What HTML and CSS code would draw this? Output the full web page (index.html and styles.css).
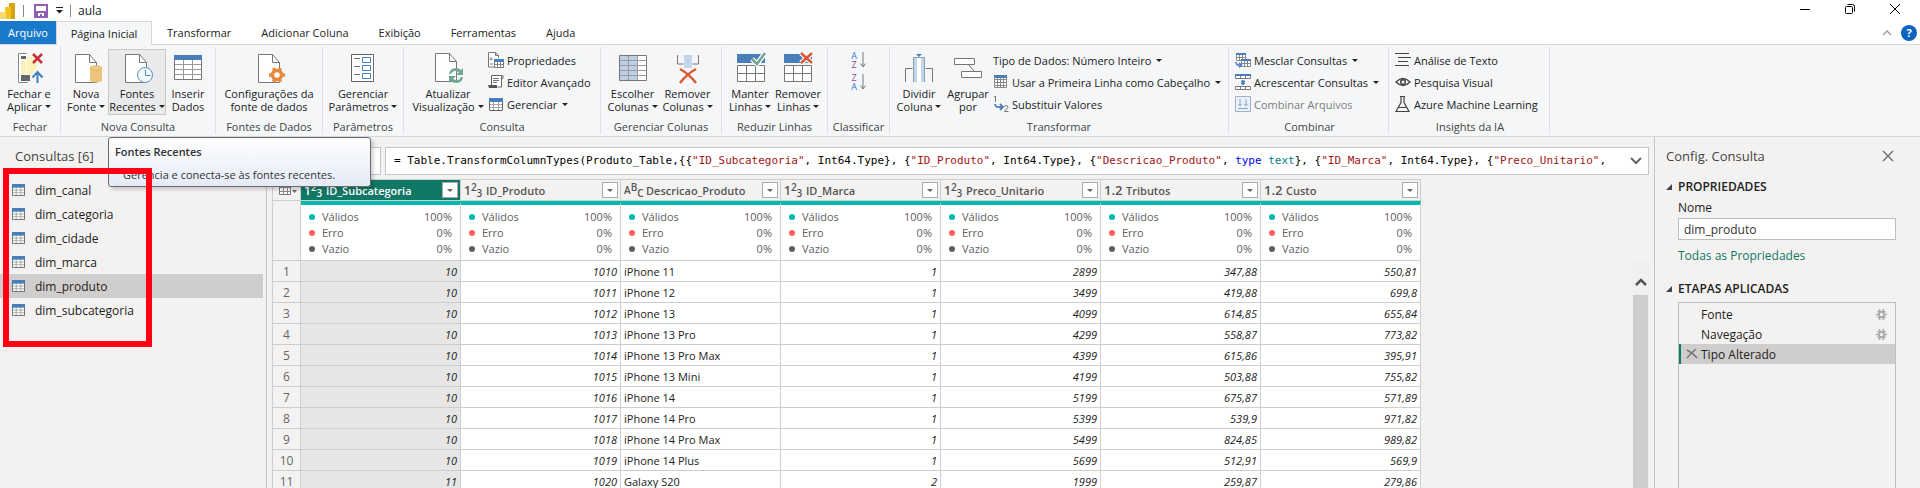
FILE: index.html
```html
<!DOCTYPE html>
<html lang="pt-BR">
<head>
<meta charset="utf-8">
<title>aula - Editor do Power Query</title>
<link rel="stylesheet" href="styles.css">
</head>
<body>
<svg class="defs" aria-hidden="true">
  <symbol id="page" viewBox="0 0 32 32"><path d="M5.500 2.500h14l7 8v20h-21z" fill="#fff" stroke="#777"/><path d="M19.500 2.500v8h7" fill="none" stroke="#777"/></symbol>
  <symbol id="table" viewBox="0 0 14 13"><path d="M.5.500h13v12H.5z" fill="#fff" stroke="#666"/><path d="M1 6.500h12M1 9.500h12M4.500 3v9M9.500 3v9" stroke="#a6a6a6"/><path d="M0 0h14v4H0z" fill="#4a7ebb"/></symbol>
  <symbol id="gear" viewBox="0 0 12 12"><path d="M4 0v12M8 0v12M0 6h12M1.500 3h9M1.500 9h9" stroke="#a8a8a8" stroke-width="1.600"/><circle cx="6" cy="6" r="3.500" fill="#a8a8a8"/><circle cx="6" cy="6" r="1.800" fill="#f3f2f1"/></symbol>
  <symbol id="corner" viewBox="0 0 20 14"><path d="M1.500 1.500h11v10h-11z" fill="#fff" stroke="#777"/><path d="M1.500 4.500h11M1.500 8.500h11M5.500 1v10M9.500 1v10" stroke="#888"/><path d="M14 7h5l-2.500 3z" fill="#666"/></symbol>
</svg>
<div class="app">
<header class="titlebar">
  <svg class="logo" viewBox="0 0 16 16"><path d="M9 0h6v16H9z" fill="#d9a213"/><path d="M5 4h6v12H5z" fill="#f2c21c"/><path d="M0 9h6v7H0z" fill="#f7dc6b"/></svg>
  <span class="bar"></span>
  <button class="tbtn" aria-label="Salvar"><svg width="14" height="14" viewBox="0 0 14 14"><path d="M1 1h12v12H1z" fill="#fff" stroke="#8e5fb5" stroke-width="2"/><path d="M1 7h12v2H1zM1 9h3v4H1zM10 9h3v4h-3z" fill="#8e5fb5"/><path d="M6 10h2v4H6z" fill="#8e5fb5"/></svg></button>
  <button class="tbtn qa" aria-label="Personalizar"><svg width="7" height="7" viewBox="0 0 7 7"><path d="M0 .5h7" stroke="#222"/><path d="M0 3h7L3.500 6.500z" fill="#222"/></svg></button>
  <span class="bar"></span>
  <span class="doc">aula</span>
  <div class="wincontrols">
    <button class="tbtn" aria-label="Minimizar"><svg width="12" height="12" viewBox="0 0 12 12"><path d="M1 6.500h10" stroke="#000"/></svg></button>
    <button class="tbtn" aria-label="Restaurar"><svg width="12" height="12" viewBox="0 0 12 12"><rect x="1.500" y="3.500" width="7" height="7" rx="1" fill="none" stroke="#000"/><path d="M3.500 1.500h5q2 0 2 2v5" fill="none" stroke="#000"/></svg></button>
    <button class="tbtn" aria-label="Fechar janela"><svg width="12" height="12" viewBox="0 0 12 12"><path d="M1 1l10 10M11 1L1 11" stroke="#000"/></svg></button>
  </div>
</header>
<nav class="tabs">
  <button class="tab file">Arquivo</button>
  <button class="tab active">Página Inicial</button>
  <button class="tab">Transformar</button>
  <button class="tab">Adicionar Coluna</button>
  <button class="tab">Exibição</button>
  <button class="tab">Ferramentas</button>
  <button class="tab">Ajuda</button>
  <div class="tabtools">
    <button class="tbtn" aria-label="Recolher faixa"><svg width="10" height="8" viewBox="0 0 10 8"><path d="M1 6l4-4 4 4" fill="none" stroke="#999" stroke-width="1.300"/></svg></button>
    <button class="help" aria-label="Ajuda do aplicativo">?</button>
  </div>
</nav>
<section class="ribbon">
  <div class="group g-close"><div class="items">
    <button class="big w50"><svg class="ico" viewBox="0 0 32 32"><path d="M14 1.500H5.500v29H15" fill="#fff" stroke="#888"/><path d="M8 9h5v13H8zM14 5h5l5 6v6l-6 5h-4z" fill="#fcf1b6"/><path d="M8 4h5v3H8zM8 23h9v6H8z" fill="#666"/><path d="M20 2l9 9M29 2l-9 9" stroke="#c92f34" stroke-width="2.500"/><path d="M24.500 31V21M19.500 25.500l5-5.500 5 5.500" fill="none" stroke="#4180bd" stroke-width="2"/></svg><span>Fechar e<br>Aplicar <i class="caret"></i></span></button>
  </div><div class="caption">Fechar</div></div>
  <div class="group g-new"><div class="items">
    <button class="big w44"><svg class="ico" viewBox="0 0 32 32"><use href="#page"/><path d="M20 15q6-3 12 0v14q-6 3-12 0z" fill="#ecc57c"/><ellipse cx="26" cy="16" rx="5.500" ry="2" fill="#f0cd8d" stroke="#e0b464"/></svg><span>Nova<br>Fonte <i class="caret"></i></span></button>
    <button class="big w58 hot"><svg class="ico" viewBox="0 0 32 32"><use href="#page" x="-1"/><circle cx="24" cy="23" r="7.500" fill="#f4f8fc" stroke="#5b93c4"/><path d="M24.500 18v5.500h5" fill="none" stroke="#4a87bd"/></svg><span>Fontes<br>Recentes <i class="caret"></i></span></button>
    <button class="big w44"><svg class="ico" viewBox="0 0 32 32"><path d="M2.500 3.500h27v24h-27z" fill="#fff" stroke="#777"/><path d="M3 12.500h26M3 17.500h26M3 22.500h26M11.500 8v19M20.500 8v19" stroke="#999"/><path d="M2 3h28v5H2z" fill="#4a7ebb"/></svg><span>Inserir<br>Dados</span></button>
  </div><div class="caption">Nova Consulta</div></div>
  <div class="group g-src"><div class="items">
    <button class="big w98"><svg class="ico" viewBox="0 0 32 32"><use href="#page"/><circle cx="24" cy="23" r="4.500" fill="#fff" stroke="#e58a3e" stroke-width="3.500"/><path d="M16 23h3M29 23h3M20.500 16l1.500 3M27.500 16L26 19M20.500 30l1.500-3M27.500 30L26 27" stroke="#e58a3e" stroke-width="3.500"/></svg><span>Configurações da<br>fonte de dados</span></button>
  </div><div class="caption">Fontes de Dados</div></div>
  <div class="group g-par"><div class="items">
    <button class="big w72"><svg class="ico" viewBox="0 0 32 32"><path d="M4.500 2.500h22v27h-22z" fill="#fff" stroke="#666"/><path d="M7 6.500h6M7 14.500h6M7 22.500h6" stroke="#777"/><path d="M15.500 5.500h8v5h-8zM15.500 13.500h8v5h-8zM15.500 21.500h8v5h-8z" fill="none" stroke="#4a7ebb"/></svg><span>Gerenciar<br>Parâmetros <i class="caret"></i></span></button>
  </div><div class="caption">Parâmetros</div></div>
  <div class="group g-qry"><div class="items">
    <button class="big w80"><svg class="ico" viewBox="0 0 32 32"><use href="#page" x="-2" y="-1"/><path d="M17 22q1-6 7-6 3 0 5 2l2-2v7h-7l3-3q-6-3-8 2zM31 25q-1 6-7 6-3 0-5-2l-2 2v-7h7l-3 3q6 3 8-2z" fill="#70a693"/></svg><span>Atualizar<br>Visualização <i class="caret"></i></span></button>
    <div class="small-col">
      <button class="small"><svg viewBox="0 0 16 16"><path d="M6 15H.5V.5h7l3 3V6M7.500.5v3h3" fill="#fff" stroke="#777"/><circle cx="3" cy="7" r="1" fill="none" stroke="#777"/><path d="M2 12h3" stroke="#777"/><path d="M6.500 7.500h9v8h-9z" fill="#fff" stroke="#777"/><path d="M7 12.500h8M9.500 10v5M12.500 10v5" stroke="#888"/><path d="M6 7h10v3H6z" fill="#4a7ebb"/></svg>Propriedades</button>
      <button class="small"><svg viewBox="0 0 16 16"><path d="M3.500 12V1.500h10V13h-4" fill="#fff" stroke="#666"/><path d="M12 1.500h3v3h-2M5 4.500h6M5 6.500h6M5 8.500h4" fill="none" stroke="#777"/><path d="M0 11h9v3H1z" fill="#555"/></svg>Editor Avançado</button>
      <button class="small"><svg viewBox="0 0 16 16"><use href="#table" x="1" y="2" width="14" height="13"/></svg>Gerenciar <i class="caret"></i></button>
    </div>
  </div><div class="caption">Consulta</div></div>
  <div class="group g-col"><div class="items">
    <button class="big w55"><svg class="ico" viewBox="0 0 32 32"><path d="M2.500 3.500h27v25h-27z" fill="#fff" stroke="#777"/><path d="M3 4h18v24H3z" fill="#bdd0e8"/><path d="M3 8.500h26M3 13.500h26M3 18.500h26M3 23.500h26M11.500 4v24M20.500 4v24" stroke="#999"/></svg><span>Escolher<br>Colunas <i class="caret"></i></span></button>
    <button class="big w55"><svg class="ico" viewBox="0 0 32 32"><path d="M5.500 3v9h6M26.500 3v9h-6" fill="none" stroke="#777"/><path d="M12 3h8v13H12z" fill="#c3d5ea"/><path d="M8 17q9 5 16 14M24 17Q15 22 8 31" fill="none" stroke="#da5836" stroke-width="2.500"/></svg><span>Remover<br>Colunas <i class="caret"></i></span></button>
  </div><div class="caption">Gerenciar Colunas</div></div>
  <div class="group g-row"><div class="items">
    <button class="big w48"><svg class="ico" viewBox="0 0 32 32"><path d="M3 2h28v9H3z" fill="#4a7ebb"/><path d="M3.500 13.500h27v16h-27zM3 21.500h28M12.500 13v16M21.500 13v16" fill="#fff" stroke="#777"/><path d="M18 7l5 5 8-11" fill="none" stroke="#fff" stroke-width="5"/><path d="M18 7l5 5 8-11" fill="none" stroke="#70a693" stroke-width="2.500"/></svg><span>Manter<br>Linhas <i class="caret"></i></span></button>
    <button class="big w48"><svg class="ico" viewBox="0 0 32 32"><path d="M2 2h28v9H2z" fill="#4a7ebb"/><path d="M2.500 13.500h27v16h-27zM2 21.500h28M11.500 13v16M20.500 13v16" fill="#fff" stroke="#777"/><path d="M19 1l11 10M30 1L19 11" stroke="#fff" stroke-width="5"/><path d="M19 1l11 10M30 1L19 11" stroke="#da5836" stroke-width="2.500"/></svg><span>Remover<br>Linhas <i class="caret"></i></span></button>
  </div><div class="caption">Reduzir Linhas</div></div>
  <div class="group g-sort"><div class="items sort">
    <button class="sortbtn" aria-label="Crescente"><span class="az"><b class="a">A</b><b class="z">Z</b></span><svg width="6" height="16" viewBox="0 0 6 16"><path d="M3 0v15M.5 11.500L3 15l2.500-3.500" fill="none" stroke="#777"/></svg></button>
    <button class="sortbtn" aria-label="Decrescente"><span class="az"><b class="z">Z</b><b class="a">A</b></span><svg width="6" height="16" viewBox="0 0 6 16"><path d="M3 0v15M.5 11.500L3 15l2.500-3.500" fill="none" stroke="#777"/></svg></button>
  </div><div class="caption">Classificar</div></div>
  <div class="group g-trf"><div class="items">
    <button class="big w50"><svg class="ico" viewBox="0 0 32 32"><path d="M2.500 30V16.500h7M29.500 30V16.500h-7" fill="none" stroke="#777"/><path d="M10 5h4v25h-4zM18 5h4v25h-4z" fill="#c3d5ea"/><path d="M10.500 30V5.500h11V30" fill="none" stroke="#8d9db0"/><path d="M14 6h4v24h-4z" fill="#fff"/><path d="M13 2h6l-3 3z" fill="#4180bd"/></svg><span>Dividir<br>Coluna <i class="caret"></i></span></button>
    <button class="big w48"><svg class="ico" viewBox="0 0 32 32"><path d="M16 12l6 7" stroke="#777"/><path d="M2.500 6.500h20v6h-20zM9.500 19.500h20v6h-20z" fill="#fff" stroke="#777"/></svg><span>Agrupar<br>por</span></button>
    <div class="small-col">
      <button class="small">Tipo de Dados: Número Inteiro <i class="caret"></i></button>
      <button class="small"><svg viewBox="0 0 16 16"><path d="M1.500 2.500h12v11h-12zM1 5.500h13M1 8.500h13M1 11.500h13M4.500 3v11M7.500 3v11M10.500 3v11" fill="#fff" stroke="#888"/><path d="M1 1h13v3H1z" fill="#4a7ebb"/></svg>Usar a Primeira Linha como Cabeçalho <i class="caret"></i></button>
      <button class="small"><svg viewBox="0 0 16 16"><path d="M1 1l1.500-1v6" fill="none" stroke="#777"/><path d="M2 8q0 4 7 3M7 8l3 3-3 3" fill="none" stroke="#4a7ebb" stroke-width="1.800"/><path d="M11.500 11q0-1.500 1.800-1.500 2 0 1.500 2l-3.300 4h4" fill="none" stroke="#777"/></svg>Substituir Valores</button>
    </div>
  </div><div class="caption">Transformar</div></div>
  <div class="group g-comb"><div class="items">
    <div class="small-col">
      <button class="small"><svg viewBox="0 0 16 16"><path d="M1.500 1.500h9v7h-9zM1 5.500h10M4.500 2v7M7.500 2v7" fill="#fff" stroke="#888"/><path d="M1 1h10v2H1z" fill="#4a7ebb"/><path d="M6.500 7.500h9v7h-9zM6 11.500h10M9.500 8v7M12.500 8v7" fill="#fff" stroke="#888"/><path d="M6 7h10v2H6z" fill="#4a7ebb"/><path d="M1 10q0 4 5 3M4 11l2.500 2L4 15.500" fill="none" stroke="#4a7ebb" stroke-width="1.500"/></svg>Mesclar Consultas <i class="caret"></i></button>
      <button class="small"><svg viewBox="0 0 16 16"><path d="M.5 1.500h15v3H.5zM.5 12.500h15v3H.5zM5.500 2v3M10.500 2v3M5.500 12v4M10.500 12v4" fill="#fff" stroke="#777"/><path d="M0 0h16v2H0z" fill="#4a7ebb"/><path d="M8 6v5M6 7.500h4M6 9.500h4" stroke="#4a7ebb" stroke-width="1.500"/></svg>Acrescentar Consultas <i class="caret"></i></button>
      <button class="small" disabled><svg viewBox="0 0 16 16"><path d="M.5.5h15v15H.5z" fill="#eaf1f9" stroke="#9fb2cc"/><path d="M5 3v7M11 3v7M3.500 8L5 10l1.500-2M9.500 8l1.500 2 1.500-2M3 12.500h10" fill="none" stroke="#8ea6c6"/></svg>Combinar Arquivos</button>
    </div>
  </div><div class="caption">Combinar</div></div>
  <div class="group g-ia"><div class="items">
    <div class="small-col">
      <button class="small"><svg viewBox="0 0 16 16"><path d="M0 1.500h14M3 5.500h13M3 9.500h10M0 13.500h14" stroke="#444"/></svg>Análise de Texto</button>
      <button class="small"><svg viewBox="0 0 16 16"><path d="M1 8q7-7 14 0-7 7-14 0z" fill="none" stroke="#444" stroke-width="1.300"/><circle cx="8" cy="8" r="2.300" fill="none" stroke="#444" stroke-width="1.500"/></svg>Pesquisa Visual</button>
      <button class="small"><svg viewBox="0 0 16 16"><path d="M5 .5h5M6 .5v6l-5 9h13l-5-9v-6M3.500 11.500h8" fill="none" stroke="#444" stroke-width="1.200"/></svg>Azure Machine Learning</button>
    </div>
  </div><div class="caption">Insights da IA</div></div>
</section>
<main class="work">
  <aside class="queries">
    <h2>Consultas [6]</h2>
    <ul>
      <li><svg class="tico"><use href="#table"/></svg>dim_canal</li>
      <li><svg class="tico"><use href="#table"/></svg>dim_categoria</li>
      <li><svg class="tico"><use href="#table"/></svg>dim_cidade</li>
      <li><svg class="tico"><use href="#table"/></svg>dim_marca</li>
      <li class="sel"><svg class="tico"><use href="#table"/></svg>dim_produto</li>
      <li><svg class="tico"><use href="#table"/></svg>dim_subcategoria</li>
    </ul>
  </aside>
  <section class="center">
    <div class="formula">
      <div class="fxbox"></div>
      <div class="code"><code>= Table.TransformColumnTypes(Produto_Table,{{<s>"ID_Subcategoria"</s>, Int64.Type}, {<s>"ID_Produto"</s>, Int64.Type}, {<s>"Descricao_Produto"</s>, <b class="kw">type</b> <b class="ty">text</b>}, {<s>"ID_Marca"</s>, Int64.Type}, {<s>"Preco_Unitario"</s>,</code>
        <button class="tbtn" aria-label="Expandir"><svg width="12" height="8" viewBox="0 0 12 8"><path d="M1 1l5 5 5-5" fill="none" stroke="#666" stroke-width="2"/></svg></button></div>
    </div>
    <div class="gridarea">
      <table class="grid">
        <colgroup><col class="cnum"><col><col><col><col><col><col><col></colgroup>
        <thead>
          <tr class="names">
            <th class="cornercell"><svg width="20" height="14"><use href="#corner"/></svg></th>
            <th class="picked"><div><span class="type">1<sup>2</sup><sub>3</sub></span>ID_Subcategoria<button class="filter" aria-label="Filtrar"></button></div></th>
            <th><div><span class="type">1<sup>2</sup><sub>3</sub></span>ID_Produto<button class="filter" aria-label="Filtrar"></button></div></th>
            <th><div><span class="type abc">A<sup>B</sup><sub>C</sub></span>Descricao_Produto<button class="filter" aria-label="Filtrar"></button></div></th>
            <th><div><span class="type">1<sup>2</sup><sub>3</sub></span>ID_Marca<button class="filter" aria-label="Filtrar"></button></div></th>
            <th><div><span class="type">1<sup>2</sup><sub>3</sub></span>Preco_Unitario<button class="filter" aria-label="Filtrar"></button></div></th>
            <th><div><span class="type dec">1.2</span>Tributos<button class="filter" aria-label="Filtrar"></button></div></th>
            <th><div><span class="type dec">1.2</span>Custo<button class="filter" aria-label="Filtrar"></button></div></th>
          </tr>
          <tr class="profile">
            <td class="num"></td>
            <td><p class="ok">Válidos<span>100%</span></p><p class="err">Erro<span>0%</span></p><p class="nil">Vazio<span>0%</span></p></td>
            <td><p class="ok">Válidos<span>100%</span></p><p class="err">Erro<span>0%</span></p><p class="nil">Vazio<span>0%</span></p></td>
            <td><p class="ok">Válidos<span>100%</span></p><p class="err">Erro<span>0%</span></p><p class="nil">Vazio<span>0%</span></p></td>
            <td><p class="ok">Válidos<span>100%</span></p><p class="err">Erro<span>0%</span></p><p class="nil">Vazio<span>0%</span></p></td>
            <td><p class="ok">Válidos<span>100%</span></p><p class="err">Erro<span>0%</span></p><p class="nil">Vazio<span>0%</span></p></td>
            <td><p class="ok">Válidos<span>100%</span></p><p class="err">Erro<span>0%</span></p><p class="nil">Vazio<span>0%</span></p></td>
            <td><p class="ok">Válidos<span>100%</span></p><p class="err">Erro<span>0%</span></p><p class="nil">Vazio<span>0%</span></p></td>
          </tr>
        </thead>
        <tbody>
          <tr><th>1</th><td>10</td><td>1010</td><td>iPhone 11</td><td>1</td><td>2899</td><td>347,88</td><td>550,81</td></tr>
          <tr><th>2</th><td>10</td><td>1011</td><td>iPhone 12</td><td>1</td><td>3499</td><td>419,88</td><td>699,8</td></tr>
          <tr><th>3</th><td>10</td><td>1012</td><td>iPhone 13</td><td>1</td><td>4099</td><td>614,85</td><td>655,84</td></tr>
          <tr><th>4</th><td>10</td><td>1013</td><td>iPhone 13 Pro</td><td>1</td><td>4299</td><td>558,87</td><td>773,82</td></tr>
          <tr><th>5</th><td>10</td><td>1014</td><td>iPhone 13 Pro Max</td><td>1</td><td>4399</td><td>615,86</td><td>395,91</td></tr>
          <tr><th>6</th><td>10</td><td>1015</td><td>iPhone 13 Mini</td><td>1</td><td>4199</td><td>503,88</td><td>755,82</td></tr>
          <tr><th>7</th><td>10</td><td>1016</td><td>iPhone 14</td><td>1</td><td>5199</td><td>675,87</td><td>571,89</td></tr>
          <tr><th>8</th><td>10</td><td>1017</td><td>iPhone 14 Pro</td><td>1</td><td>5399</td><td>539,9</td><td>971,82</td></tr>
          <tr><th>9</th><td>10</td><td>1018</td><td>iPhone 14 Pro Max</td><td>1</td><td>5499</td><td>824,85</td><td>989,82</td></tr>
          <tr><th>10</th><td>10</td><td>1019</td><td>iPhone 14 Plus</td><td>1</td><td>5699</td><td>512,91</td><td>569,9</td></tr>
          <tr><th>11</th><td>11</td><td>1020</td><td>Galaxy S20</td><td>2</td><td>1999</td><td>259,87</td><td>279,86</td></tr>
        </tbody>
      </table>
      <div class="scroll">
        <button class="tbtn up" aria-label="Rolar para cima"><svg width="12" height="10" viewBox="0 0 12 10"><path d="M1 8l5-5 5 5" fill="none" stroke="#555" stroke-width="2.500"/></svg></button>
        <div class="thumb"></div>
      </div>
    </div>
  </section>
  <aside class="settings">
    <div class="sethead"><h2>Config. Consulta</h2><button class="tbtn" aria-label="Fechar painel"><svg width="12" height="12" viewBox="0 0 12 12"><path d="M1 1l10 10M11 1L1 11" stroke="#666" stroke-width="1.200"/></svg></button></div>
    <h3>PROPRIEDADES</h3>
    <div class="props">
      <label for="nome">Nome</label>
      <input id="nome" type="text" value="dim_produto">
      <a href="#">Todas as Propriedades</a>
    </div>
    <h3>ETAPAS APLICADAS</h3>
    <ol class="steps">
      <li>Fonte<svg class="gear"><use href="#gear"/></svg></li>
      <li>Navegação<svg class="gear"><use href="#gear"/></svg></li>
      <li class="cur"><svg class="del" viewBox="0 0 12 10"><path d="M1 1q6 3 10 8M10 0Q5 4 1 9" fill="none" stroke="#777" stroke-width="1.500"/></svg>Tipo Alterado</li>
    </ol>
  </aside>
</main>
</div>
<div class="tooltip" role="tooltip"><strong>Fontes Recentes</strong><p>Gerencia e conecta-se às fontes recentes.</p></div>
<div class="mark"></div>
</body>
</html>
```
FILE: styles.css
```css
* { box-sizing: border-box; }
body { margin: 0; font: 11px/13px "Open Sans", "Noto Sans", sans-serif; color: #222; background: #fff; overflow: hidden; }
h2, h3, p, ul, ol { margin: 0; padding: 0; font-weight: 400; list-style: none; }
button { font: inherit; color: inherit; background: none; border: 0; padding: 0; margin: 0; }
svg { display: block; flex: none; }
.defs { position: absolute; width: 0; height: 0; }
.app { display: flex; flex-direction: column; height: 100vh; }

.titlebar { display: flex; align-items: center; height: 21px; flex: none; }
.logo { width: 16px; height: 16px; }
.tbtn { display: flex; align-items: center; justify-content: center; }
.bar { width: 1px; height: 12px; background: #888; margin: 0 10px 0 7px; }
.bar + .doc { margin-left: -3px; font-size: 12px; }
.qa { margin-left: 8px; }
.wincontrols { display: flex; margin-left: auto; gap: 33px; padding: 0 19px 4px 0; }

.tabs { display: flex; height: 24px; flex: none; border-bottom: 1px solid #d5d7d9; }
.tab { padding: 0 15px; font-size: 11px; }
.tab.file { background: #1979ca; color: #fff; width: 56px; padding: 0; height: 23px; }
.tab.active { background: #f4f6f8; border: 1px solid #d5d7d9; border-bottom: 0; height: 24px; padding: 0 13px; width: 96px; }
.tabtools { display: flex; align-items: center; gap: 9px; margin-left: auto; padding-right: 3px; }
.help { width: 16px; height: 16px; border-radius: 8px; background: #0b63c4; color: #fff; font-weight: 700; line-height: 16px; }

.ribbon { display: flex; flex: none; background: #f4f6f8; padding: 2px 0; border-bottom: 1px solid #d5d7d9; }
.group { flex: none; display: flex; flex-direction: column; border-right: 1px solid #dfe1e4; padding: 2px 4px 0; }
.g-close { width: 61px; }
.g-new { width: 155px; padding: 2px 3px 0; }
.g-src { width: 107px; }
.g-par { width: 81px; }
.g-qry { width: 197px; }
.g-col { width: 121px; }
.g-row { width: 106px; }
.g-sort { width: 62px; }
.g-trf { width: 339px; }
.g-comb { width: 160px; padding-left: 6px; }
.g-ia { width: 161px; padding-left: 6px; }
.items { display: flex; height: 66px; }
.caption { text-align: center; padding: 5px 0 0; line-height: 14px; color: #444; white-space: nowrap; }
.big { display: flex; flex-direction: column; align-items: center; gap: 3px; padding-top: 3px; border: 0; white-space: nowrap; }
.big.hot { background: #e8eaec; box-shadow: inset 0 0 0 1px #c6c8ca; }
.ico { width: 32px; height: 32px; }
.w44 { width: 44px; } .w48 { width: 48px; } .w50 { width: 50px; } .w55 { width: 55px; }
.w58 { width: 58px; } .w72 { width: 72px; } .w80 { width: 80px; } .w98 { width: 98px; }
.caret { display: inline-block; border: 3px solid transparent; border-top-color: #222; border-bottom: 0; vertical-align: 3px; }
.small-col { display: flex; flex-direction: column; }
.small { display: flex; align-items: center; height: 22px; gap: 3px; white-space: nowrap; }
.small svg { width: 16px; height: 16px; }
.small:disabled { color: #808080; }
.small .caret { margin: 0 0 0 2px; }
.g-trf .small { padding-left: 1px; }
.sort { flex-direction: column; align-items: center; gap: 4px; padding: 2px 0 0 0; }
.sortbtn { display: flex; align-items: center; gap: 3px; }
.az { display: flex; flex-direction: column; }
.az b { font-size: 9px; line-height: 9px; font-weight: 400; }
.a { color: #2f7cc4; } .z { color: #8b4aa8; }

.work { display: flex; flex: 1; min-height: 0; background: #f3f2f1; }
.queries { width: 267px; flex: none; border-right: 1px solid #c8c6c4; padding-right: 3px; }
h2 { font-size: 13px; line-height: 20px; font-weight: 400; color: #444; }
.queries h2 { padding: 9px 15px 12px; }
.queries li { display: flex; align-items: center; gap: 10px; height: 24px; padding-left: 12px; font-size: 12px; }
.tico { width: 13px; height: 12px; }
.sel { background: #d0cecc; }

.center { flex: 1; min-width: 0; display: flex; flex-direction: column; padding: 10px 5px 0 5px; }
.formula { display: flex; gap: 4px; flex: none; height: 28px; }
.fxbox { width: 109px; border: 1px solid #c8c6c4; background: #fff; }
.code { flex: 1; display: flex; align-items: center; justify-content: space-between; border: 1px solid #c8c6c4; background: #fff; padding: 0 6px 0 8px; overflow: hidden; }
code { font: 11px/14px "DejaVu Sans Mono", monospace; color: #000; white-space: pre; }
code s { text-decoration: none; color: #a31515; }
code b { font-weight: 400; }
.kw { color: #0000ff; } .ty { color: #008080; }
.gridarea { flex: 1; min-height: 0; display: flex; justify-content: space-between; padding-top: 4px; overflow: hidden; }
.grid { border-spacing: 0; table-layout: fixed; width: 1149px; flex: none; align-self: flex-start; border-left: 1px solid #d0cecc; }
.cnum { width: 28px; }
.grid th, .grid td { border-right: 1px solid #d0cecc; border-bottom: 1px solid #d0cecc; padding: 0; height: 21px; white-space: nowrap; }
.names th { border-top: 1px solid #d0cecc; color: #555; font-weight: 600; background: #f3f2f1; }
.grid .names th { height: 22px; }
.names div { display: flex; align-items: center; padding: 0 2px 0 3px; height: 20px; }
.grid .picked { background: #117865; color: #fff; }
.type { flex: none; width: 22px; font-size: 12px; text-align: left; display: flex; align-items: center; }
.type sup, .type sub { font-size: 10px; line-height: 10px; vertical-align: baseline; }
.type sup { padding-bottom: 7px; } .type sub { padding-top: 5px; }
.type.abc { font-size: 10px; }
.type.dec { font-size: 13px; }
.filter { flex: none; margin-left: auto; width: 16px; height: 16px; background: #fff; border: 1px solid #aaa; display: flex; align-items: center; justify-content: center; }
.filter::after { content: ""; border: 3px solid transparent; border-top-color: #666; border-bottom: 0; }
.cornercell svg { margin-left: 5px; }
.profile td { background: #fff; border-top: 4px solid #01b8aa; color: #605e5c; vertical-align: top; font-weight: 600; }
.grid .profile td { padding: 4px 8px 3px; }
.grid .profile .num { background: #f3f2f1; border-top: 0; }
.profile p { display: flex; align-items: center; line-height: 16px; }
.profile p::before { content: ""; width: 6px; height: 6px; border-radius: 3px; margin-right: 7px; }
.profile span { margin-left: auto; }
.ok::before { background: #01b8aa; } .err::before { background: #fd625e; } .nil::before { background: #605e5c; }
tbody td { background: #fff; text-align: right; font-style: italic; }
.grid tbody td { padding: 0 3px; }
tbody td:nth-child(2) { background: #e6e6e6; }
tbody td:nth-child(4) { text-align: left; font-style: normal; }
tbody th { font-weight: 400; font-size: 12px; color: #666; }
.scroll { width: 17px; margin-top: 82px; display: flex; flex-direction: column; background: #f0f0f0; }
.up { height: 34px; padding-top: 8px; }
.thumb { flex: 1; background: #cdcdcd; width: 15px; margin: 0 1px; }

.settings { width: 266px; flex: none; border-left: 1px solid #c8c6c4; padding: 9px 24px 0 11px; display: flex; flex-direction: column; }
.sethead { display: flex; justify-content: space-between; align-items: center; padding-right: 2px; }
h3 { font-size: 12px; line-height: 16px; font-weight: 600; display: flex; align-items: center; gap: 6px; margin-top: 13px; flex: none; }
h3::before { content: ""; border-bottom: 6px solid #444; border-left: 6px solid transparent; }
.props { display: flex; flex-direction: column; align-items: flex-start; margin-left: 12px; font-size: 12px; line-height: 16px; padding: 5px 0 4px; }
.props input { width: 100%; height: 22px; margin: 2px 0 8px; border: 1px solid #c0bebc; font: inherit; color: #333; padding: 0 5px; }
.props a { color: #117865; text-decoration: none; }
.steps { margin: 5px 0 0 12px; border: 1px solid #c0bebc; border-bottom: 0; flex: 1; padding-top: 1px; }
.steps li { display: flex; align-items: center; height: 20px; padding: 0 8px 0 22px; font-size: 12px; }
.gear { width: 11px; height: 11px; margin-left: auto; }
.steps .cur { background: #d0cecc; border-left: 2px solid #117865; padding-left: 5px; gap: 3px; }
.del { width: 12px; height: 10px; }

.tooltip { position: absolute; left: 108px; top: 137px; width: 263px; height: 50px; border: 1px solid #6a6a6a; border-radius: 3px; background: linear-gradient(#fff, #e4eaf6); padding: 7px 6px; color: #333; box-shadow: 3px 3px 3px rgba(0,0,0,.15); }
.tooltip strong { font-weight: 600; }
.tooltip p { padding: 10px 0 0 8px; white-space: nowrap; }
.mark { position: absolute; left: 3px; top: 168px; width: 149px; height: 179px; border: 6px solid #ff0015; pointer-events: none; }
```
